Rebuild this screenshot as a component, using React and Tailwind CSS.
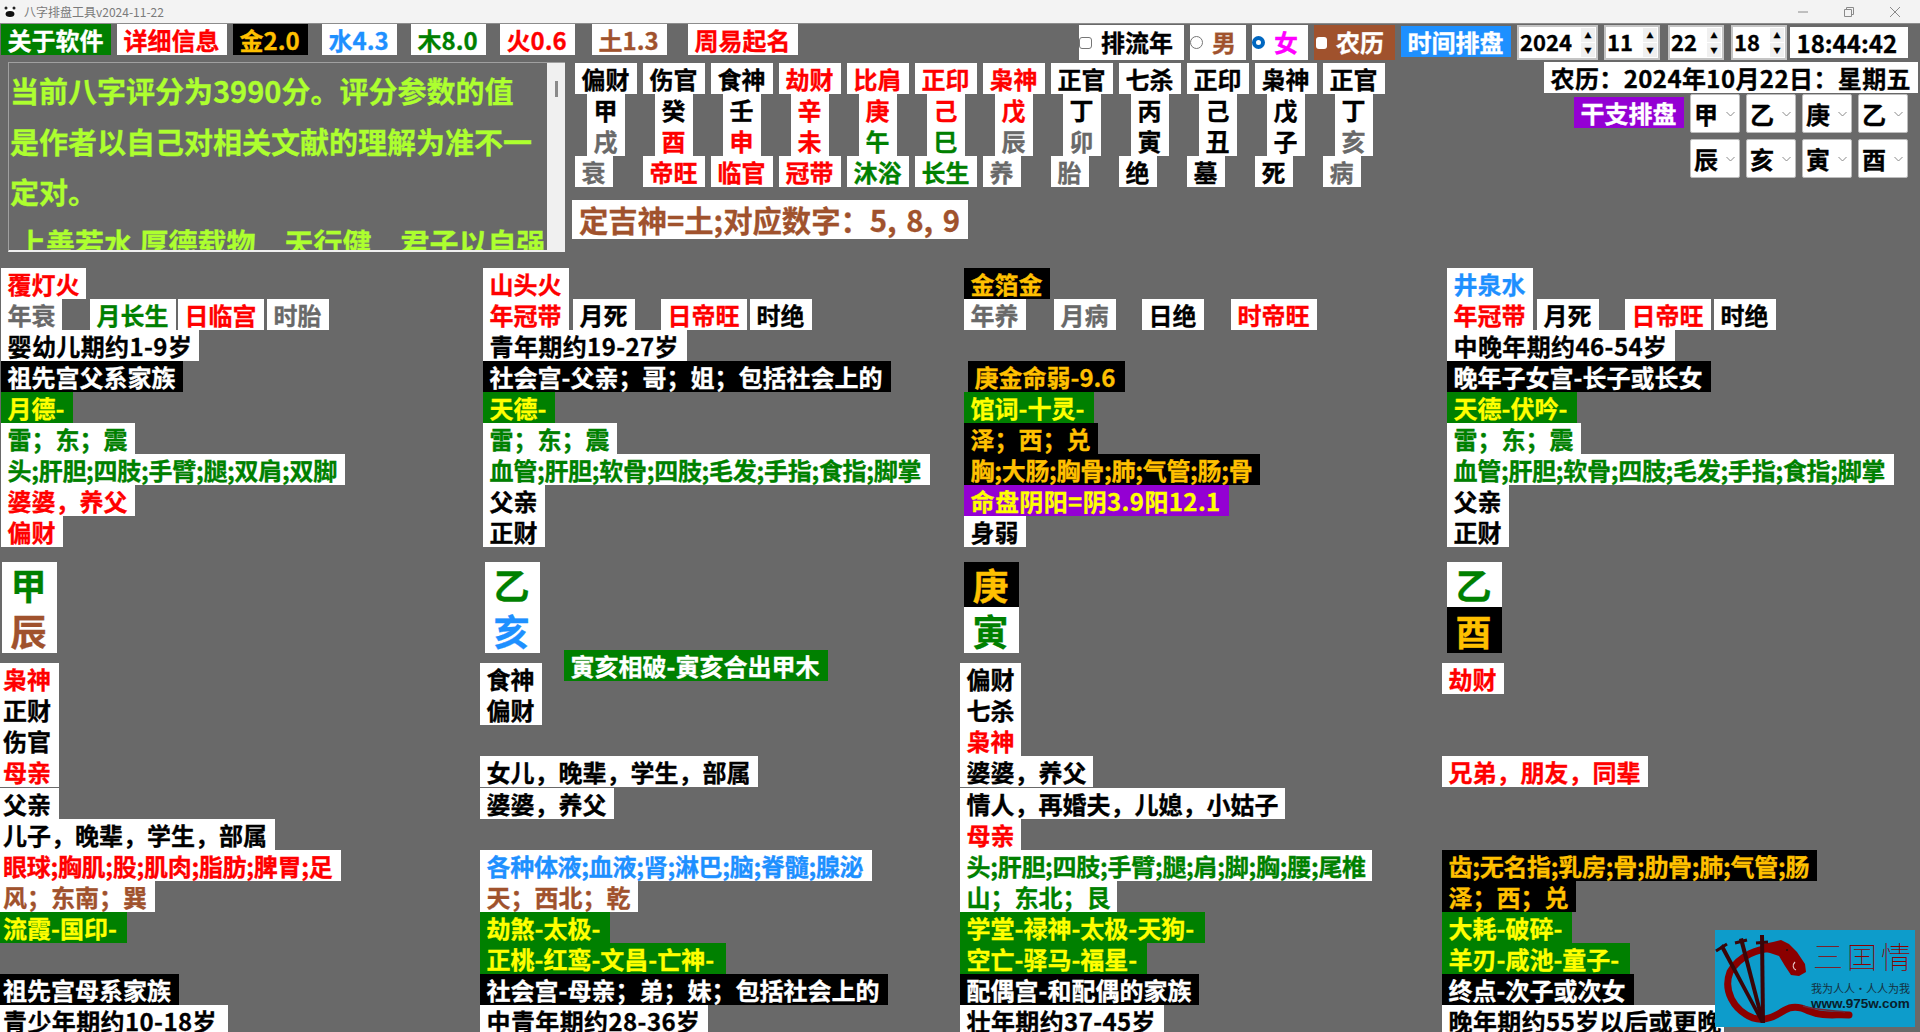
import React from 'react';

// warna label (WinForms Label: latar + warna teks)
const K = 'bg-white text-black';
const R = 'bg-white text-[#ff0000]';
const G = 'bg-white text-[#008000]';
const H = 'bg-white text-[#696969]';
const B = 'bg-white text-[#1e90ff]';
const S = 'bg-white text-[#a0522d]';
const D = 'bg-black text-white';
const A = 'bg-black text-[#ffc000]';
const Y = 'bg-[#008000] text-[#ffff00]';
const P = 'bg-[#9400d3] text-[#ffff00]';
// baris dengan banyak ";" sedikit lebih rapat, baris angka sedikit lebih renggang
const N = 'tracking-[-0.3px]';
const W = 'tracking-[0.4px]';

function T({ c, w, className = '', children }) {
  return (
    <div className={`h-[31px] shrink-0 whitespace-nowrap pl-[6.5px] text-[24px] font-bold leading-[31px] ${c} ${w} ${className}`}>
      {children}
    </div>
  );
}

function Stack({ rows }) {
  return (
    <div className="flex flex-col items-start">
      {rows.map((r, i) =>
        r ? (
          <T key={i} c={r[1]} w={r[2]} className={r[3] || ''}>{r[0]}</T>
        ) : (
          <div key={i} className="h-[31px]" />
        )
      )}
    </div>
  );
}

const grid = [
  ['偏财', K, '甲', K, '戌', H, '衰', H],
  ['伤官', K, '癸', K, '酉', R, '帝旺', R],
  ['食神', K, '壬', K, '申', R, '临官', R],
  ['劫财', R, '辛', R, '未', R, '冠带', R],
  ['比肩', R, '庚', R, '午', G, '沐浴', G],
  ['正印', R, '己', R, '巳', G, '长生', G],
  ['枭神', R, '戊', R, '辰', H, '养', H],
  ['正官', K, '丁', K, '卯', H, '胎', H],
  ['七杀', K, '丙', K, '寅', K, '绝', K],
  ['正印', K, '己', K, '丑', K, '墓', K],
  ['枭神', K, '戊', K, '子', K, '死', K],
  ['正官', K, '丁', K, '亥', H, '病', H],
];

function GridCol({ d }) {
  return (
    <div className="flex w-[62px] flex-col items-start">
      <T c={d[1]} w="w-[62px]">{d[0]}</T>
      <T c={d[3]} w="w-[38px]" className="ml-[12px]">{d[2]}</T>
      <T c={d[5]} w="w-[38px]" className="ml-[12px]">{d[4]}</T>
      <T c={d[7]} w={d[6].length > 1 ? 'w-[62px]' : 'w-[38px]'}>{d[6]}</T>
    </div>
  );
}

function Spinner({ value, w, className = '' }) {
  return (
    <div className={`flex h-[35px] items-center justify-between border-2 border-[#c4c4c4] bg-white pl-[1px] pr-[1px] ${w} ${className}`}>
      <span className="pb-[2px] text-[22px] font-bold leading-[29px] text-black">{value}</span>
      <div className="flex h-[29px] w-[14px] flex-col gap-[1px]">
        <div className="flex flex-1 items-center justify-center bg-[#f0f0f0] text-[7px] leading-none text-black">▲</div>
        <div className="flex flex-1 items-center justify-center bg-[#f0f0f0] text-[7px] leading-none text-black">▼</div>
      </div>
    </div>
  );
}

function Sel({ v }) {
  return (
    <div className="flex h-[39px] w-[50px] items-center justify-between rounded-[2px] border border-[#bdbdbd] bg-white pl-[3px] pr-[4px]">
      <span className="text-[24px] font-bold leading-[31px] text-black">{v}</span>
      <svg width="9" height="6" viewBox="0 0 9 6" fill="none" stroke="#8a8a8a" strokeWidth="1"><path d="M0.5 1l4 4 4-4" /></svg>
    </div>
  );
}

function Pillar({ top, topText, bottom, bottomText }) {
  return (
    <div className="flex w-[55px] flex-col">
      <div className={`flex h-[45px] items-center justify-center pr-[2px] text-[36px] font-bold leading-[45px] ${top}`}>{topText}</div>
      <div className={`flex h-[46px] items-center justify-center pr-[2px] text-[36px] font-bold leading-[46px] ${bottom}`}>{bottomText}</div>
    </div>
  );
}

const lowerA = {
  top: [
    ['枭神', R, 'w-[59px]', '!pl-[3px]'],
    ['正财', K, 'w-[59px]', '!pl-[3px]'],
    ['伤官', K, 'w-[59px]', '!pl-[3px]'],
    ['母亲', R, 'w-[59px]', '!pl-[3px]'],
  ],
  rest: [
    ['父亲', K, 'w-[59px]', '!pl-[3px]'],
    ['儿子，晚辈，学生，部属', K, 'w-[275px]', '!pl-[3px]'],
    ['眼球;胸肌;股;肌肉;脂肪;脾胃;足', R, 'w-[341px]', `!pl-[3px] ${N}`],
    ['风；东南；巽', S, 'w-[155px]', '!pl-[3px]'],
    ['流霞-国印-', Y, 'w-[127px]', '!pl-[3px]'],
    null,
    ['祖先宫母系家族', D, 'w-[179px]', '!pl-[3px]'],
    ['青少年期约10-18岁', K, 'w-[228px]', `!pl-[3px] ${W}`],
  ],
};

const lowerB = {
  top: [['食神', K, 'w-[62px]'], ['偏财', K, 'w-[62px]'], null, ['女儿，晚辈，学生，部属', K, 'w-[278px]']],
  rest: [
    ['婆婆，养父', K, 'w-[134px]'],
    null,
    ['各种体液;血液;肾;淋巴;脑;脊髓;腺泌', B, 'w-[392px]', N],
    ['天；西北；乾', S, 'w-[158px]'],
    ['劫煞-太极-', Y, 'w-[130px]'],
    ['正桃-红鸾-文昌-亡神-', Y, 'w-[246px]'],
    ['社会宫-母亲；弟；妹；包括社会上的', D, 'w-[408px]'],
    ['中青年期约28-36岁', K, 'w-[228px]', W],
  ],
};

const lowerC = {
  top: [['偏财', K, 'w-[61px]'], ['七杀', K, 'w-[61px]'], ['枭神', R, 'w-[61px]'], ['婆婆，养父', K, 'w-[133px]']],
  rest: [
    ['情人，再婚夫，儿媳，小姑子', K, 'w-[325px]'],
    ['母亲', R, 'w-[61px]'],
    ['头;肝胆;四肢;手臂;腿;肩;脚;胸;腰;尾椎', G, 'w-[412px]', N],
    ['山；东北；艮', G, 'w-[157px]'],
    ['学堂-禄神-太极-天狗-', Y, 'w-[245px]'],
    ['空亡-驿马-福星-', Y, 'w-[187px]'],
    ['配偶宫-和配偶的家族', D, 'w-[239px]'],
    ['壮年期约37-45岁', K, 'w-[204px]', W],
  ],
};

const lowerD = {
  top: [['劫财', R, 'w-[62px]'], null, null, ['兄弟，朋友，同辈', R, 'w-[206px]']],
  rest: [
    null,
    null,
    ['齿;无名指;乳房;骨;肋骨;肺;气管;肠', A, 'w-[375px]', N],
    ['泽；西；兑', A, 'w-[134px]'],
    ['大耗-破碎-', Y, 'w-[130px]'],
    ['羊刃-咸池-童子-', Y, 'w-[188px]'],
    ['终点-次子或次女', D, 'w-[192px]'],
    ['晚年期约55岁以后或更晚', K, 'w-[282px]', W],
  ],
};

function Lower({ d }) {
  return (
    <div className="flex flex-col gap-[1px]">
      <Stack rows={d.top} />
      <Stack rows={d.rest} />
    </div>
  );
}

function Logo() {
  return (
    <div className="absolute left-[1715px] top-[930px] h-[97px] w-[200px] overflow-hidden bg-[#0d9ccb] [-webkit-text-stroke:0]">
      <svg className="absolute left-0 top-0" width="200" height="97" viewBox="0 0 200 97" fill="none">
        <path d="M60 19C44 17 24 26 15 42C8 60 18 80 38 88C50 92 60 86 70 80C78 75 86 77 94 81C108 87 120 84 134 85" stroke="#8b0000" strokeWidth="7" strokeLinecap="round" />
        <path d="M88 76C100 80 114 80 130 82" stroke="#6d2a3a" strokeWidth="1.5" />
        <path d="M48 14L58 12L66 10L74 14L82 22L90 34L91 42L84 46L76 45L70 36L64 26L52 22Z" fill="#8b0000" />
        <path d="M80 32C77 35 78 39 81 40" stroke="#e8c8c8" strokeWidth="1.2" />
        <circle cx="72" cy="20" r="1" fill="#1a1010" />
        <path d="M5 17L8 14L50 93L46 93Z" fill="#3a0508" />
        <path d="M24 9L28 8L50 93L46 93Z" fill="#3a0508" />
        <path d="M45 5L49 5L50 93L46 93Z" fill="#3a0508" />
        <path d="M1 21L12 14M20 13L32 10M41 13L53 12" stroke="#3a0508" strokeWidth="3" />
      </svg>
      <div className="absolute left-[98px] top-[8px] flex w-[98px] justify-between text-[30px] font-thin leading-[34px] text-[#8b0000]">
        <span>三</span>
        <span>囯</span>
        <span>情</span>
      </div>
      <div className="absolute left-[96px] top-[50px] flex w-[99px] justify-between whitespace-nowrap text-[11px] leading-[16px] text-[#15303f]">
        <span>我为人人</span>
        <span>·</span>
        <span>人人为我</span>
      </div>
      <div className="absolute left-[96px] top-[66px] whitespace-nowrap font-['Liberation_Sans',sans-serif] text-[13.5px] font-bold leading-[16px] text-[#08202c]">www.975w.com</div>
    </div>
  );
}

export default function App() {
  return (
    <div className="relative h-[1032px] w-[1920px] overflow-hidden bg-[#696969] font-['Noto_Sans_CJK_SC','Liberation_Sans',sans-serif] [-webkit-text-stroke:0.3px_currentColor]">
      {/* title bar */}
      <div className="flex h-[24px] items-center justify-between border-b border-[#8c8c8c] bg-[#f3f3f3] pl-[4px] [-webkit-text-stroke:0]">
        <div className="flex items-center gap-[8px]">
          <svg width="12" height="14" viewBox="0 0 12 14"><ellipse cx="6" cy="8" rx="5.5" ry="5" fill="#fff" /><ellipse cx="6" cy="9" rx="4.5" ry="3" fill="#111" /><circle cx="2" cy="3" r="1.5" fill="#222" /><circle cx="10" cy="3" r="1.5" fill="#222" /></svg>
          <span className="text-[12px] leading-[16px] text-[#7a7a7a]">八字排盘工具v2024-11-22</span>
        </div>
        <div className="mr-[20px] flex items-center gap-[36px] text-[#8a8a8a]">
          <svg width="10" height="10" viewBox="0 0 10 10" stroke="currentColor" fill="none"><path d="M0 5h10" /></svg>
          <svg width="10" height="10" viewBox="0 0 10 10" stroke="currentColor" fill="none"><path d="M0.5 2.5h7v7h-7zM2.5 2.5v-2h7v7h-2" /></svg>
          <svg width="10" height="10" viewBox="0 0 10 10" stroke="currentColor" fill="none"><path d="M0 0l10 10M10 0L0 10" /></svg>
        </div>
      </div>

      {/* toolbar */}
      <div className="flex h-[38px] items-start pl-[1px]">
        <T c="bg-[#008000] text-white" w="w-[110px]">关于软件</T>
        <T c={R} w="w-[110px]" className="ml-[6px]">详细信息</T>
        <T c={A} w="w-[75px]" className="ml-[6px]">金2.0</T>
        <T c={B} w="w-[75px]" className="ml-[14px]">水4.3</T>
        <T c={G} w="w-[75px]" className="ml-[14px]">木8.0</T>
        <T c={R} w="w-[75px]" className="ml-[14px]">火0.6</T>
        <T c={S} w="w-[75px]" className="ml-[17px]">土1.3</T>
        <T c={R} w="w-[110px]" className="ml-[21px]">周易起名</T>

        <div className="ml-[281px] mt-[1px] flex h-[35px] w-[105px] items-center bg-white pb-[2px] text-[24px] font-bold text-black">
          <span className="mt-[2px] h-[12px] w-[13px] rounded-[3px] border border-[#767676] bg-white" />
          <span className="ml-[9px]">排流年</span>
        </div>
        <div className="ml-[6px] mt-[1px] flex h-[35px] w-[56px] items-center bg-white pb-[2px] text-[24px] font-bold text-[#a0522d]">
          <span className="mt-[2px] h-[13px] w-[13px] rounded-full border border-[#767676] bg-white" />
          <span className="ml-[9px]">男</span>
        </div>
        <div className="ml-[6px] mt-[1px] flex h-[35px] w-[56px] items-center bg-white pb-[2px] text-[24px] font-bold text-[#ff00ff]">
          <span className="mt-[2px] h-[13px] w-[13px] rounded-full border-[4px] border-[#0067c0] bg-white" />
          <span className="ml-[9px]">女</span>
        </div>
        <div className="ml-[6px] mt-[1px] flex h-[35px] w-[81px] items-center bg-[#a0522d] pb-[2px] pl-[2px] text-[24px] font-bold text-white">
          <span className="mt-[2px] h-[12px] w-[11px] rounded-[3px] bg-white" />
          <span className="ml-[9px]">农历</span>
        </div>
        <T c="bg-[#1e90ff] text-white" w="w-[110px]" className="ml-[6px] mt-[2px]">时间排盘</T>
        <div className="ml-[6px] mt-[1px] flex items-start">
          <Spinner value="2024" w="w-[81px]" />
          <Spinner value="11" w="w-[56px]" className="ml-[6px]" />
          <Spinner value="22" w="w-[56px]" className="ml-[8px]" />
          <Spinner value="18" w="w-[56px]" className="ml-[7px]" />
        </div>
        <T c={K} w="w-[118px]" className="ml-[3px] mt-[3px]">18:44:42</T>
      </div>

      {/* upper panel */}
      <div className="flex h-[206px] items-start pl-[8px]">
        <div className="relative h-[190px] w-[557px] shrink-0 overflow-hidden border-b-2 border-l border-t border-[#a0a0a0] border-b-[#f0f0f0]">
          <div className="w-[539px] pl-[1px] text-[29px] font-bold leading-[50.5px] text-[#adff2f]">
            <div className="pt-[2px]">当前八字评分为3990分。评分参数的值</div>
            <div>是作者以自己对相关文献的理解为准不一</div>
            <div>定对。</div>
            <div className="whitespace-nowrap pl-[7px]">上善若水 厚德载物　天行健　君子以自强</div>
          </div>
          <div className="absolute bottom-0 right-0 top-0 flex w-[18px] justify-center bg-[#f0f0f0] pt-[18px]">
            <div className="h-[16px] w-[3px] bg-[#8a8a8a]" />
          </div>
        </div>

        <div className="ml-[10px] flex w-[810px] shrink-0 flex-col items-start pt-[1px]">
          <div className="flex gap-[6px]">
            {grid.map((d, i) => <GridCol key={i} d={d} />)}
          </div>
          <div className="-ml-[3px] mt-[13px] h-[39px] w-[396px] whitespace-nowrap bg-white pl-[7px] text-[29.33px] font-bold leading-[39px] text-[#a0522d] [word-spacing:3px]">
            定吉神=土;对应数字：5, 8, 9
          </div>
        </div>

        <div className="ml-[159px] flex w-[374px] shrink-0 flex-col items-end">
          <T c={K} w="w-[374px]" className="tracking-[0.4px]">农历：2024年10月22日：星期五</T>
          <div className="mt-[1px] flex w-[374px] items-start">
            <T c="bg-[#9400d3] text-white" w="w-[110px]" className="ml-[30px] mt-[3px]">干支排盘</T>
            <div className="ml-[6px] grid grid-cols-[50px_50px_50px_50px] gap-x-[6px] gap-y-[6px]">
              {['甲', '乙', '庚', '乙', '辰', '亥', '寅', '酉'].map((v, i) => <Sel key={i} v={v} />)}
            </div>
          </div>
        </div>
      </div>

      {/* four pillars: upper notes */}
      <div className="grid grid-cols-[482px_481px_483px_1fr] pl-[1px]">
        <div className="flex flex-col items-start">
          <T c={R} w="w-[85px]">覆灯火</T>
          <div className="flex">
            <T c={H} w="w-[61px]">年衰</T>
            <T c={G} w="w-[86px]" className="ml-[28px]">月长生</T>
            <T c={R} w="w-[86px]" className="ml-[2px]">日临宫</T>
            <T c={H} w="w-[62px]" className="ml-[3px]">时胎</T>
          </div>
          <Stack rows={[
            ['婴幼儿期约1-9岁', K, 'w-[198px]', W],
            ['祖先宫父系家族', D, 'w-[182px]'],
            ['月德-', Y, 'w-[72px]'],
            ['雷；东；震', G, 'w-[134px]'],
            ['头;肝胆;四肢;手臂;腿;双肩;双脚', G, 'w-[344px]', N],
            ['婆婆，养父', R, 'w-[134px]'],
            ['偏财', R, 'w-[62px]'],
          ]} />
        </div>
        <div className="flex flex-col items-start">
          <T c={R} w="w-[86px]">山头火</T>
          <div className="flex">
            <T c={R} w="w-[86px]">年冠带</T>
            <T c={K} w="w-[62px]" className="ml-[4px]">月死</T>
            <T c={R} w="w-[86px]" className="ml-[26px]">日帝旺</T>
            <T c={K} w="w-[62px]" className="ml-[3px]">时绝</T>
          </div>
          <Stack rows={[
            ['青年期约19-27岁', K, 'w-[204px]', W],
            ['社会宫-父亲；哥；姐；包括社会上的', D, 'w-[408px]'],
            ['天德-', Y, 'w-[72px]'],
            ['雷；东；震', G, 'w-[134px]'],
            ['血管;肝胆;软骨;四肢;毛发;手指;食指;脚掌', G, 'w-[447px]', N],
            ['父亲', K, 'w-[62px]'],
            ['正财', K, 'w-[62px]'],
          ]} />
        </div>
        <div className="flex flex-col items-start">
          <T c={A} w="w-[86px]">金箔金</T>
          <div className="flex">
            <T c={H} w="w-[62px]">年养</T>
            <T c={H} w="w-[62px]" className="ml-[28px]">月病</T>
            <T c={K} w="w-[62px]" className="ml-[26px]">日绝</T>
            <T c={R} w="w-[86px]" className="ml-[27px]">时帝旺</T>
          </div>
          <Stack rows={[
            null,
            ['庚金命弱-9.6', A, 'w-[157px]', 'ml-[4px]'],
            ['馆词-十灵-', Y, 'w-[130px]'],
            ['泽；西；兑', A, 'w-[134px]'],
            ['胸;大肠;胸骨;肺;气管;肠;骨', A, 'w-[296px]', N],
            ['命盘阴阳=阴3.9阳12.1', P, 'w-[265px]', W],
            ['身弱', K, 'w-[62px]'],
          ]} />
        </div>
        <div className="flex flex-col items-start">
          <T c={B} w="w-[86px]">井泉水</T>
          <div className="flex">
            <T c={R} w="w-[86px]">年冠带</T>
            <T c={K} w="w-[62px]" className="ml-[4px]">月死</T>
            <T c={R} w="w-[86px]" className="ml-[26px]">日帝旺</T>
            <T c={K} w="w-[62px]" className="ml-[3px]">时绝</T>
          </div>
          <Stack rows={[
            ['中晚年期约46-54岁', K, 'w-[228px]', W],
            ['晚年子女宫-长子或长女', D, 'w-[264px]'],
            ['天德-伏吟-', Y, 'w-[130px]'],
            ['雷；东；震', G, 'w-[134px]'],
            ['血管;肝胆;软骨;四肢;毛发;手指;食指;脚掌', G, 'w-[447px]', N],
            ['父亲', K, 'w-[62px]'],
            ['正财', K, 'w-[62px]'],
          ]} />
        </div>
      </div>

      {/* four pillars: big characters */}
      <div className="mt-[15px] grid grid-cols-[483px_479px_483px_1fr] pl-[2px]">
        <Pillar top={G} topText="甲" bottom={S} bottomText="辰" />
        <Pillar top={G} topText="乙" bottom={B} bottomText="亥" />
        <Pillar top={A} topText="庚" bottom={G} bottomText="寅" />
        <Pillar top={G} topText="乙" bottom={A} bottomText="酉" />
      </div>

      {/* four pillars: lower notes */}
      <div className="mt-[10px] grid grid-cols-[480px_480px_482px_1fr]">
        <Lower d={lowerA} />
        <div className="flex items-start">
          <Lower d={lowerB} />
          <T c="bg-[#008000] text-white" w="w-[264px]" className="relative -ml-[324px] -mt-[13px]">寅亥相破-寅亥合出甲木</T>
        </div>
        <Lower d={lowerC} />
        <Lower d={lowerD} />
      </div>

      <Logo />
    </div>
  );
}
